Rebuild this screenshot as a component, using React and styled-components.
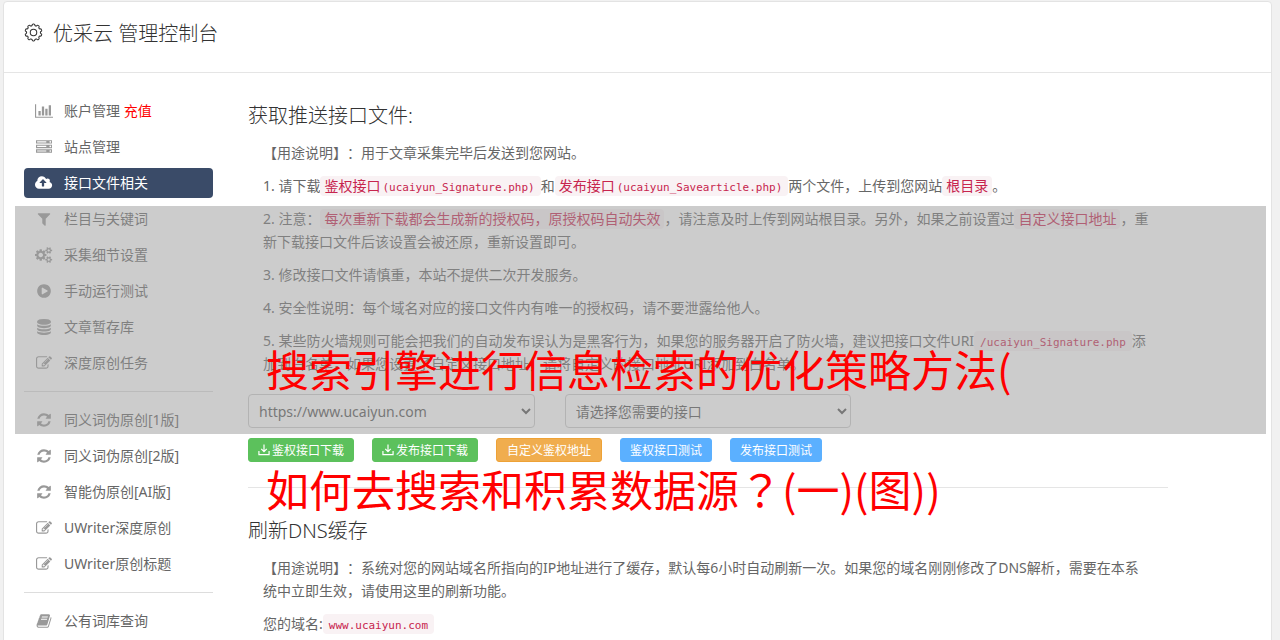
import React from 'react';
import styled, { createGlobalStyle } from 'styled-components';

const GlobalStyle = createGlobalStyle`
  * { box-sizing: border-box; }

  body {
    margin: 0;
    background-color: #f1f1f1;
    color: #666;
    font-family: "Noto Sans", "Noto Sans CJK SC", sans-serif;
    font-size: 14px;
    text-spacing-trim: space-all;
  }
`;

const Page = styled.div`
  position: relative;
  height: 100vh;
  padding: 1px 8px 0 3px;
  overflow: hidden;
`;

const Card = styled.div`
  min-height: 100%;
  border: 1px solid #e3e3e3;
  border-radius: 4px;
  background-color: #fff;
`;

const Header = styled.header`
  display: flex;
  align-items: center;
  gap: 10px;
  height: 71px;
  padding: 0 20px 10px;
  border-bottom: 1px solid #e5e5e5;
  color: #333;
`;

const Title = styled.h1`
  margin: 0;
  font-size: 20px;
  font-weight: 300;
`;

const Body = styled.div`
  display: flex;
  gap: 35px;
  padding: 23px 103px 0 20px;
`;

const Nav = styled.nav`
  display: flex;
  flex: 0 0 189px;
  flex-direction: column;
  gap: 6px;
`;

const NavLink = styled.a`
  display: flex;
  align-items: center;
  gap: 10px;
  height: 30px;
  padding: 0 10px;
  border-radius: 4px;
  background-color: ${props => (props.$active ? '#3a4b68' : 'transparent')};
  color: ${props => (props.$active ? '#fff' : '#666')};
  text-decoration: none;
  white-space: nowrap;
`;

const Label = styled.span`
  padding-bottom: 2px;
`;

const IconBox = styled.span`
  display: flex;
  justify-content: center;
  width: 20px;
  color: ${props => (props.$active ? '#fff' : '#999')};
`;

const Recharge = styled.span`
  color: #f00;
`;

const NavRule = styled.hr`
  width: 100%;
  height: 1px;
  margin: 7px 0;
  border: 0;
  background-color: #ddd;
`;

const Main = styled.main`
  flex: 1;
  min-width: 0;
  padding-top: 4px;
`;

const Heading = styled.h2`
  margin: 0 0 9px;
  color: #333;
  font-size: 20px;
  font-weight: 300;
  line-height: 32px;
`;

const Notes = styled.div`
  padding: 0 18px 0 15px;
`;

const Note = styled.p`
  margin: 0 0 10px;
  line-height: 23px;
`;

const Code = styled.code`
  padding: 2px 4px;
  border-radius: 4px;
  background-color: #f9f2f4;
  color: #c7254e;
  font-family: "DejaVu Sans Mono", "Noto Sans CJK SC", monospace;
  font-size: 14px;
  line-height: 1;
`;

const Path = styled.span`
  padding: 0 2px;
  font-size: 11px;
`;

const Selects = styled.div`
  display: flex;
  gap: 30px;
  padding-top: 9px;
`;

const Select = styled.select`
  width: calc((100% - 60px) / 3);
  height: 34px;
  padding: 0 6px;
  border: 1px solid #ccc;
  border-radius: 4px;
  background-color: #fff;
  color: #555;
  font: inherit;
`;

const Buttons = styled.div`
  display: flex;
  gap: 18px;
  padding-top: 10px;
`;

const Button = styled.button`
  display: flex;
  align-items: center;
  gap: 2px;
  height: 24px;
  padding: 0 ${props => (props.$border ? 10 : 9)}px;
  border: 1px solid ${props => props.$border || props.$color};
  border-radius: 3px;
  background-color: ${props => props.$color};
  color: #fff;
  font: inherit;
  font-size: 12px;
  white-space: nowrap;
`;

const Rule = styled.hr`
  height: 1px;
  margin: 25px 0 27px;
  border: 0;
  background-color: #e5e5e5;
`;

const Veil = styled.div`
  position: absolute;
  top: 206px;
  right: 14px;
  left: 15px;
  height: 228px;
  background-color: rgba(153, 153, 153, 0.5);
`;

const Banner = styled.p`
  position: absolute;
  top: 308px;
  left: 266px;
  margin: 0;
  color: #f00;
  font-family: "Noto Sans CJK SC", sans-serif;
  font-size: 43px;
  line-height: 120px;
  white-space: nowrap;
`;

// keeps the question mark in the middle of its square
const Centred = styled.span`
  font-family: "Noto Sans CJK TC", sans-serif;
`;

const icons = {
  chart: [2048, 'M640 896v512h-256v-512h256zm384-512v1024h-256v-1024h256zm1024 1152v128h-2048v-1536h128v1408h1920zm-640-896v768h-256v-768h256zm384-384v1152h-256v-1152h256z'],
  server: [1792, 'M128 1408h1024v-128h-1024v128zm0-512h1024v-128h-1024v128zm1568 448q0-40-28-68t-68-28-68 28-28 68 28 68 68 28 68-28 28-68zm-1568-960h1024v-128h-1024v128zm1568 448q0-40-28-68t-68-28-68 28-28 68 28 68 68 28 68-28 28-68zm0-512q0-40-28-68t-68-28-68 28-28 68 28 68 68 28 68-28 28-68zm96 832v384h-1792v-384h1792zm0-512v384h-1792v-384h1792zm0-512v384h-1792v-384h1792z'],
  cloud: [1920, 'M1280 864q0-14-9-23l-352-352q-9-9-23-9t-23 9l-351 351q-10 12-10 24 0 14 9 23t23 9h224v352q0 13 9.5 22.5t22.5 9.5h192q13 0 22.5-9.5t9.5-22.5v-352h224q13 0 22.5-9.5t9.5-22.5zm640 288q0 159-112.5 271.5t-271.5 112.5h-1088q-185 0-316.5-131.5t-131.5-316.5q0-130 70-240t188-165q-2-30-2-43 0-212 150-362t362-150q156 0 285.5 87t188.5 231q71-62 166-62 106 0 181 75t75 181q0 76-41 138 130 31 213.5 135.5t83.5 238.5z'],
  filter: [1792, 'M1595 295q17 41-14 70l-493 493v742q0 42-39 59-13 5-25 5-27 0-45-19l-256-256q-19-19-19-45v-486l-493-493q-31-29-14-70 17-39 59-39h1280q42 0 59 39z'],
  cogs: [1920, 'M896 896q0-106-75-181t-181-75-181 75-75 181 75 181 181 75 181-75 75-181zm768 512q0-52-38-90t-90-38-90 38-38 90q0 53 37.5 90.5t90.5 37.5 90.5-37.5 37.5-90.5zm0-1024q0-52-38-90t-90-38-90 38-38 90q0 53 37.5 90.5t90.5 37.5 90.5-37.5 37.5-90.5zm-384 421v185q0 10-7 19.5t-16 10.5l-155 24q-11 35-32 76 34 48 90 115 7 11 7 20 0 12-7 19-23 30-82.5 89.5t-78.5 59.5q-11 0-21-7l-115-90q-37 19-77 31-11 108-23 155-7 24-30 24h-186q-11 0-20-7.5t-10-17.5l-23-153q-34-10-75-31l-118 89q-7 7-20 7-11 0-21-8-144-133-144-160 0-9 7-19 10-14 41-53t47-61q-23-44-35-82l-152-24q-10-1-17-9.5t-7-19.5v-185q0-10 7-19.5t16-10.5l155-24q11-35 32-76-34-48-90-115-7-11-7-20 0-12 7-20 22-30 82-89t79-59q11 0 21 7l115 90q34-18 77-32 11-108 23-154 7-24 30-24h186q11 0 20 7.5t10 17.5l23 153q34 10 75 31l118-89q8-7 20-7 11 0 21 8 144 133 144 160 0 8-7 19-12 16-42 54t-45 60q23 48 34 82l152 23q10 2 17 10.5t7 19.5zm640 533v140q0 16-149 31-12 27-30 52 51 113 51 138 0 4-4 7-122 71-124 71-8 0-46-47t-52-68q-20 2-30 2t-30-2q-14 21-52 68t-46 47q-2 0-124-71-4-3-4-7 0-25 51-138-18-25-30-52-149-15-149-31v-140q0-16 149-31 13-29 30-52-51-113-51-138 0-4 4-7 4-2 35-20t59-34 30-16q8 0 46 46.5t52 67.5q20-2 30-2t30 2q51-71 92-112l6-2q4 0 124 70 4 3 4 7 0 25-51 138 17 23 30 52 149 15 149 31zm0-1024v140q0 16-149 31-12 27-30 52 51 113 51 138 0 4-4 7-122 71-124 71-8 0-46-47t-52-68q-20 2-30 2t-30-2q-14 21-52 68t-46 47q-2 0-124-71-4-3-4-7 0-25 51-138-18-25-30-52-149-15-149-31v-140q0-16 149-31 13-29 30-52-51-113-51-138 0-4 4-7 4-2 35-20t59-34 30-16q8 0 46 46.5t52 67.5q20-2 30-2t30 2q51-71 92-112l6-2q4 0 124 70 4 3 4 7 0 25-51 138 17 23 30 52 149 15 149 31z'],
  play: [1792, 'M896 128q209 0 385.5 103t279.5 279.5 103 385.5-103 385.5-279.5 279.5-385.5 103-385.5-103-279.5-279.5-103-385.5 103-385.5 279.5-279.5 385.5-103zm384 823q32-18 32-55t-32-55l-544-320q-31-19-64-1-32 19-32 56v640q0 37 32 56 16 8 32 8 17 0 32-9z'],
  database: [1792, 'M896 768q237 0 443-43t325-127v170q0 69-103 128t-280 93.5-385 34.5-385-34.5-280-93.5-103-128v-170q119 84 325 127t443 43zm0 768q237 0 443-43t325-127v170q0 69-103 128t-280 93.5-385 34.5-385-34.5-280-93.5-103-128v-170q119 84 325 127t443 43zm0-384q237 0 443-43t325-127v170q0 69-103 128t-280 93.5-385 34.5-385-34.5-280-93.5-103-128v-170q119 84 325 127t443 43zm0-1152q208 0 385 34.5t280 93.5 103 128v128q0 69-103 128t-280 93.5-385 34.5-385-34.5-280-93.5-103-128v-128q0-69 103-128t280-93.5 385-34.5z'],
  edit: [1792, 'M888 1184l116-116-152-152-116 116v56h96v96h56zm440-720q-16-16-33 1l-350 350q-17 17-1 33t33-1l350-350q17-17 1-33zm80 594v190q0 119-84.5 203.5t-203.5 84.5h-832q-119 0-203.5-84.5t-84.5-203.5v-832q0-119 84.5-203.5t203.5-84.5h832q63 0 117 25 15 7 18 23 3 17-9 29l-49 49q-14 14-32 8-23-6-45-6h-832q-66 0-113 47t-47 113v832q0 66 47 113t113 47h832q66 0 113-47t47-113v-126q0-13 9-22l64-64q15-15 35-7t20 29zm-96-738l288 288-672 672h-288v-288zm444 132l-92 92-288-288 92-92q28-28 68-28t68 28l152 152q28 28 28 68t-28 68z'],
  refresh: [1792, 'M1639 1056q0 5-1 7-64 268-268 434.5t-478 166.5q-146 0-282.5-55t-243.5-157l-129 129q-19 19-45 19t-45-19-19-45v-448q0-26 19-45t45-19h448q26 0 45 19t19 45-19 45l-137 137q71 66 161 102t187 36q134 0 250-65t186-179q11-17 53-117 8-23 30-23h192q13 0 22.5 9.5t9.5 22.5zm25-800v448q0 26-19 45t-45 19h-448q-26 0-45-19t-19-45 19-45l138-138q-148-137-349-137-134 0-250 65t-186 179q-11 17-53 117-8 23-30 23h-199q-13 0-22.5-9.5t-9.5-22.5v-7q65-268 270-434.5t480-166.5q146 0 284 55.5t245 156.5l130-129q19-19 45-19t45 19 19 45z'],
  book: [1792, 'M1703 478q40 57 18 129l-275 906q-19 64-76.5 107.5t-122.5 43.5h-923q-77 0-148.5-53.5t-99.5-131.5q-24-67-2-127 0-4 3-27t4-37q1-8-3-21.5t-3-19.5q2-11 8-21t16.5-23.5 16.5-23.5q23-38 45-91.5t30-91.5q3-10 .5-30t-.5-28q3-11 17-28t17-23q21-36 42-92t25-90q1-9-2.5-32t.5-28q4-13 22-30.5t22-22.5q19-26 42.5-84.5t27.5-96.5q1-8-3-25.5t-2-26.5q2-8 9-18t18-23 17-21q8-12 16.5-30.5t15-35 16-36 19.5-32 26.5-23.5 36-11.5 47.5 5.5l-1 3q38-9 51-9h761q74 0 114 56t18 130l-274 906q-36 119-71.5 153.5t-128.5 34.5h-869q-27 0-38 15-11 16-1 43 24 70 144 70h923q29 0 56-15.5t35-41.5l300-987q7-22 5-57 38 15 59 43zm-1064 2q-4 13 2 22.5t20 9.5h608q13 0 25.5-9.5t16.5-22.5l21-64q4-13-2-22.5t-20-9.5h-608q-13 0-25.5 9.5t-16.5 22.5zm-83 256q-4 13 2 22.5t20 9.5h608q13 0 25.5-9.5t16.5-22.5l21-64q4-13-2-22.5t-20-9.5h-608q-13 0-25.5 9.5t-16.5 22.5z'],
};

const Icon = ({ name }) => {
  const [width, d] = icons[name];

  return (
    <svg width={width / 112} height="16" viewBox={`0 0 ${width} 1792`} fill="currentColor" aria-hidden="true">
      <path d={d} />
    </svg>
  );
};

// ten rounded teeth, one every 36 degrees
const gearPath = Array.from({ length: 10 }, (_, i) => {
  const at = (r, deg) => {
    const a = ((i * 36 + deg - 90) * Math.PI) / 180;
    return `${(10 + r * Math.cos(a)).toFixed(2)} ${(10 + r * Math.sin(a)).toFixed(2)}`;
  };
  return `${i ? 'L' : 'M'}${at(7.6, -11)}Q${at(9.2, -9)} ${at(8.9, 0)}Q${at(9.2, 9)} ${at(7.6, 11)}Q${at(6.9, 18)} ${at(7.6, 25)}`;
}).join('') + 'Z';

const Gear = () => (
  <svg width="19" height="19" viewBox="0 0 20 20" fill="none" stroke="currentColor" strokeWidth="1.1" aria-hidden="true">
    <path d={gearPath} />
    <circle cx="10" cy="10" r="3.4" />
  </svg>
);

const Download = () => (
  <svg width="12" height="12" viewBox="0 0 13 13" fill="none" stroke="currentColor" strokeWidth="1.3" aria-hidden="true">
    <path d="M6.5 0.5V8M3.5 5.2l3 3 3-3M1 7.5v4h11v-4" />
  </svg>
);

const menu = [
  [
    { icon: 'chart', label: '账户管理', extra: '充值' },
    { icon: 'server', label: '站点管理' },
    { icon: 'cloud', label: '接口文件相关', active: true },
    { icon: 'filter', label: '栏目与关键词' },
    { icon: 'cogs', label: '采集细节设置' },
    { icon: 'play', label: '手动运行测试' },
    { icon: 'database', label: '文章暂存库' },
    { icon: 'edit', label: '深度原创任务' },
  ],
  [
    { icon: 'refresh', label: '同义词伪原创[1版]' },
    { icon: 'refresh', label: '同义词伪原创[2版]' },
    { icon: 'refresh', label: '智能伪原创[AI版]' },
    { icon: 'edit', label: 'UWriter深度原创' },
    { icon: 'edit', label: 'UWriter原创标题' },
  ],
  [
    { icon: 'book', label: '公有词库查询' },
  ],
];

const App = () => (
  <Page>
    <GlobalStyle />
    <Card>
      <Header>
        <Gear />
        <Title>优采云 管理控制台</Title>
      </Header>
      <Body>
        <Nav>
          {menu.map((group, i) => (
            <React.Fragment key={i}>
              {i > 0 && <NavRule />}
              {group.map(item => (
                <NavLink key={item.label} href="#" $active={item.active}>
                  <IconBox $active={item.active}><Icon name={item.icon} /></IconBox>
                  <Label>{item.label}{item.extra && <Recharge> {item.extra}</Recharge>}</Label>
                </NavLink>
              ))}
            </React.Fragment>
          ))}
        </Nav>
        <Main>
          <Heading>获取推送接口文件:</Heading>
          <Notes>
            <Note>【用途说明】：用于文章采集完毕后发送到您网站。</Note>
            <Note>
              1. 请下载<Code>鉴权接口<Path>(ucaiyun_Signature.php)</Path></Code>和<Code>发布接口<Path>(ucaiyun_Savearticle.php)</Path></Code>两个文件，上传到您网站<Code>根目录</Code>。
            </Note>
            <Note>
              2. 注意：<Code>每次重新下载都会生成新的授权码，原授权码自动失效</Code>，请注意及时上传到网站根目录。另外，如果之前设置过<Code>自定义接口地址</Code>，重新下载接口文件后该设置会被还原，重新设置即可。
            </Note>
            <Note>3. 修改接口文件请慎重，本站不提供二次开发服务。</Note>
            <Note>4. 安全性说明：每个域名对应的接口文件内有唯一的授权码，请不要泄露给他人。</Note>
            <Note>
              5. 某些防火墙规则可能会把我们的自动发布误认为是黑客行为，如果您的服务器开启了防火墙，建议把接口文件URI<Code><Path>/ucaiyun_Signature.php</Path></Code>添加到白名单，如果您设置了自定义接口地址，请将自定义的接口地址URI添加到白名单。
            </Note>
          </Notes>
          <Selects>
            <Select aria-label="网站域名" defaultValue="site">
              <option value="site">https://www.ucaiyun.com</option>
            </Select>
            <Select aria-label="接口" defaultValue="">
              <option value="">请选择您需要的接口</option>
            </Select>
          </Selects>
          <Buttons>
            <Button type="button" $color="#5cc15c"><Download />鉴权接口下载</Button>
            <Button type="button" $color="#5cc15c"><Download />发布接口下载</Button>
            <Button type="button" $color="#f0ad4e" $border="#eea236">自定义鉴权地址</Button>
            <Button type="button" $color="#5bb0ff">鉴权接口测试</Button>
            <Button type="button" $color="#5bb0ff">发布接口测试</Button>
          </Buttons>
          <Rule />
          <Heading>刷新DNS缓存</Heading>
          <Notes>
            <Note>
              【用途说明】：系统对您的网站域名所指向的IP地址进行了缓存，默认每6小时自动刷新一次。如果您的域名刚刚修改了DNS解析，需要在本系统中立即生效，请使用这里的刷新功能。
            </Note>
            <Note>您的域名:<Code><Path>www.ucaiyun.com</Path></Code></Note>
          </Notes>
        </Main>
      </Body>
    </Card>
    <Veil />
    <Banner>
      搜索引擎进行信息检索的优化策略方法(<br />
      如何去搜索和积累数据源<Centred>？</Centred>(一)(图))
    </Banner>
  </Page>
);

export default App;
